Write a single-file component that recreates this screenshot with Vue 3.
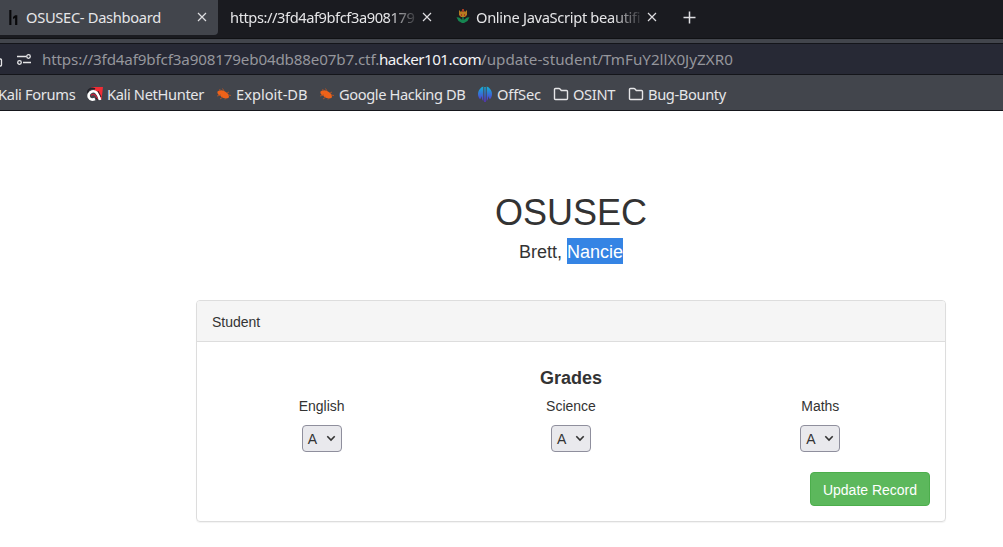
<script setup>
const bookmarks = [
  { label: 'Kali Forums', icon: '', w: 87, cls: 'forums' },
  { label: 'Kali NetHunter', icon: 'net', w: 129, cls: 'nethunter' },
  { label: 'Exploit-DB', icon: 'bug', w: 103, cls: 'exploit' },
  { label: 'Google Hacking DB', icon: 'bug', w: 158, cls: 'google' },
  { label: 'OffSec', icon: 'off', w: 76, cls: 'offsec' },
  { label: 'OSINT', icon: 'folder', w: 75, cls: 'osint' },
  { label: 'Bug-Bounty', icon: 'folder', w: 110, cls: 'bounty' },
]
const subjects = ['English', 'Science', 'Maths']
</script>

<template>
  <div class="screen">
    <header class="chrome">
      <div class="tabs">
        <div class="tab active">
          <svg class="h1icon" width="10" height="16" viewBox="0 0 10 16"><path d="M0.3 0h2.1v15H0.3zM6.1 5.3h2.2V15H6.1V8L4 9V7z" fill="#08080a" /></svg>
          <span class="title first">OSUSEC- Dashboard</span>
          <svg class="close" width="10" height="10" viewBox="0 0 10 10"><path d="M1 1l8 8M9 1L1 9" /></svg>
        </div>
        <div class="tab second">
          <span class="title fade url-title">https://3fd4af9bfcf3a908179</span>
          <svg class="close" width="10" height="10" viewBox="0 0 10 10"><path d="M1 1l8 8M9 1L1 9" /></svg>
        </div>
        <div class="tab third">
          <svg class="tulip" width="14" height="16" viewBox="0 0 14 16">
            <path d="M3 1l2 2 2-3 2 3 2-2v5L9 8H5L3 6z" fill="#b57b20" />
            <path d="M6 0h2v3H6zM5 5h1v2H5zM8 5h1v2H8z" fill="#a33b22" />
            <path d="M6.3 8h1.4v3L11 8.500l2.500-.2-2 3.700L8 14H6l-3.500-2L.5 8.300 3 8.500 6.300 11z" fill="#168551" />
          </svg>
          <span class="title fade beaut">Online JavaScript beautifi</span>
          <svg class="close" width="10" height="10" viewBox="0 0 10 10"><path d="M1 1l8 8M9 1L1 9" /></svg>
        </div>
        <svg class="plus" width="13" height="13" viewBox="0 0 13 13"><path d="M6.500 .5v12M.5 6.500h12" /></svg>
      </div>
      <div class="address">
        <svg class="lock" width="3" height="12" viewBox="0 0 3 12"><path d="M0 4h.5q1 0 1 1v5q0 1-1 1H0" /></svg>
        <svg class="perm" width="15" height="11" viewBox="0 0 15 11"><path d="M0 2.500h9M6 8.500h8" /><circle cx="11.500" cy="2.500" r="1.800" /><circle cx="2.500" cy="8.500" r="1.800" /></svg>
        <div class="url"><span class="u1">https://3fd4af9bfcf3a908179eb04db88e07b7.ctf.</span><b>hacker101.com</b><span class="u2">/update-student/TmFuY2llX0JyZXR0</span></div>
      </div>
      <nav class="bookmarks">
        <div v-for="b in bookmarks" :key="b.label" class="bookmark" :style="{ width: b.w + 'px' }">
          <svg v-if="b.icon === 'net'" class="ico" width="16" height="16" viewBox="0 0 16 16">
            <path d="M4 1h12L14.500 14 9 6z" fill="#f02c35" />
            <path d="M.5 7C1 2.500 5 1.500 8 3" fill="none" stroke="#24242b" stroke-width="1.800" />
            <path d="M13 14C11.500 7 8 4.500 5 5.500S1 9 2 11.500c1 2 3.500 2.500 6 1.500" fill="none" stroke="#fff" stroke-width="2.600" />
            <path d="M4 9.500q2.500-2.500 5 .5l1.500 3" fill="none" stroke="#c71f39" stroke-width="1.300" />
            <path d="M9 12l2 2.500M11 5l3 6" stroke="#24242b" stroke-width="1" />
          </svg>
          <svg v-else-if="b.icon === 'bug'" class="ico" width="16" height="16" viewBox="0 0 16 16">
            <path d="M1.500 5.500C4.500 3 8.500 4.500 10.500 6.500c2.500 1.500 3 4 2 5.500-3 1-6.500 0-8-2C2 9 1 7 1.500 5.500z" fill="#ee6219" />
            <path d="M5 5L3.500 3M8 5L6.500 2.500M11 7l2-1M12 9l3 .5M5 9l-4 1M7 11l-3 2M10 12l-1 1.500" stroke="#a95229" stroke-width="1" />
          </svg>
          <svg v-else-if="b.icon === 'off'" class="ico" width="16" height="16" viewBox="0 0 16 16">
            <defs><linearGradient id="og" x1="0" y1="0" x2="0" y2="1"><stop stop-color="#12b3d8" /><stop offset="1" stop-color="#5a2bd0" /></linearGradient></defs>
            <path d="M6.300.5V15C5 14 4.800 12 4.600 10 4 12 3.500 13 3 13.300A8 8 0 0 1 6.300.5zM7.300 1h1.400v15H7.300zM9.700.5V15c1.300-1 1.500-3 1.700-5 .6 2 1.100 3 1.600 3.300A8 8 0 0 0 9.700.5z" fill="url(#og)" />
          </svg>
          <svg v-else-if="b.icon === 'folder'" class="ico folder" width="16" height="16" viewBox="0 0 16 16"><path d="M1.500 3.500q0-1 1-1H6q.5 0 1 .5L8.300 4.500h5.200q1 0 1 1v7q0 1-1 1h-11q-1 0-1-1z" /></svg>
          <span :class="b.cls">{{ b.label }}</span>
        </div>
      </nav>
    </header>
    <main>
      <h1>OSUSEC</h1>
      <p class="name">Brett, <span>Nancie</span></p>
      <section class="panel">
        <div class="heading">Student</div>
        <div class="body">
          <h4>Grades</h4>
          <div class="grid">
            <div v-for="s in subjects" :key="s" class="subject">
              <label>{{ s }}</label>
              <div class="select">A<svg width="10" height="7" viewBox="0 0 10 7"><path d="M1.300 1.300L5 5l3.700-3.700" /></svg></div>
            </div>
          </div>
          <div class="actions"><button>Update Record</button></div>
        </div>
      </section>
    </main>
  </div>
</template>

<style>
body { margin: 0; background: #fff; overflow: hidden; }
</style>
<style scoped>
.screen { width: 1003px; height: 547px; overflow: hidden; background: #fff; font-family: "Liberation Sans", Arial, sans-serif; color: #333; }
.screen * { box-sizing: border-box; }
.chrome { height: 111px; background: #42454c; font-family: "Noto Sans", sans-serif; font-size: 14.67px; color: #e6e6e8; border-bottom: 1px solid #15161b; white-space: nowrap; overflow: hidden; }
svg { flex: none; }
.tabs { height: 39px; background: #1a1b20; border-bottom: 1px solid #101114; display: flex; align-items: flex-start; }
.tab { height: 35px; display: flex; align-items: center; }
.active { width: 218px; background: #42454c; border-radius: 0 0 4px 0; padding-left: 9px; }
.title { overflow: hidden; line-height: 22px; padding-bottom: 2px; }
.first { width: 162px; margin-left: 7px; letter-spacing: -.3px; }
.active .close { margin-left: 9px; }
.close, .plus { fill: none; stroke: #dedee1; stroke-width: 1.2; }
.close { margin-bottom: 1px; }
.second { width: 238px; padding-left: 12px; }
.url-title { width: 190px; letter-spacing: -.43px; }
.second .close { margin-left: 2px; }
.third { width: 227px; }
.tulip { margin-bottom: 2px; }
.beaut { width: 168px; margin-left: 6px; letter-spacing: -.32px; }
.third .close { margin-left: 3px; }
.fade { -webkit-mask-image: linear-gradient(90deg, #000 calc(100% - 32px), transparent); mask-image: linear-gradient(90deg, #000 calc(100% - 32px), transparent); }
.plus { margin-top: 11px; stroke-width: 1.5; }
.address { height: 32px; margin-top: 4px; border: solid #14151a; border-width: 1px 0; background: #272935; display: flex; align-items: center; }
.lock, .perm { fill: none; stroke: #e6e6e8; stroke-width: 1.3; }
.lock { margin-top: 4px; }
.perm { margin-left: 14px; }
.url { margin-left: 10px; color: #95969c; display: flex; font-size: 15.2px; }
.u1 { width: 337px; letter-spacing: -.16px; }
.url b { width: 102px; color: #f4f4f6; font-weight: 400; letter-spacing: -.52px; }
.u2 { letter-spacing: .02px; }
.bookmarks { height: 35px; padding-top: 3px; display: flex; align-items: center; }
.bookmark { display: flex; align-items: center; flex: none; }
.forums { margin-left: -2px; letter-spacing: -.33px; }
.nethunter { letter-spacing: -.36px; }
.google { letter-spacing: -.39px; }
.offsec { letter-spacing: -.15px; }
.osint { letter-spacing: -.35px; }
.bounty { letter-spacing: -.37px; }
.ico { margin-right: 4px; }
.folder { fill: none; stroke: #e6e6e8; stroke-width: 1.4; }
main { padding-left: 196px; width: 946px; }
h1 { margin: 0; padding-top: 82px; font-size: 36px; font-weight: 400; line-height: 40px; text-align: center; }
.name { margin: 5px 0 0; font-size: 18px; line-height: 26px; height: 26px; text-align: center; }
.name, .name span { padding-top: 0; }
.name span { display: inline-block; height: 26px; background: #3584e4; color: #fff; }
.name { line-height: 28px; }
.panel { margin-top: 36px; height: 222px; border: 1px solid #ddd; border-radius: 4px; box-shadow: 0 1px 1px rgba(0, 0, 0, .05); font-size: 14px; }
.heading { height: 41px; padding: 11px 15px; line-height: 20px; background: #f5f5f5; border-bottom: 1px solid #ddd; border-radius: 3px 3px 0 0; }
.body { padding: 26px 15px 0; }
h4 { margin: 0; font-size: 18px; line-height: 20px; text-align: center; }
.grid { display: grid; grid-template-columns: repeat(3, 1fr); margin: 8px -15px 0; }
.subject { display: flex; flex-direction: column; align-items: center; }
label { line-height: 20px; }
.select { width: 40px; height: 27px; margin-top: 9px; border: 1px solid #8f8f9d; border-radius: 4px; background: #e9e9ed; padding: 0 5px; display: flex; align-items: center; justify-content: space-between; }
.select svg { fill: none; stroke: #333; stroke-width: 1.6; }
.actions { display: flex; justify-content: flex-end; margin-top: 20px; }
button { width: 120px; height: 34px; padding: 2px 0 0; border: 1px solid #4cae4c; border-radius: 4px; background: #5cb85c; color: #fff; font: 14px "Liberation Sans", Arial, sans-serif; white-space: nowrap; }
</style>
